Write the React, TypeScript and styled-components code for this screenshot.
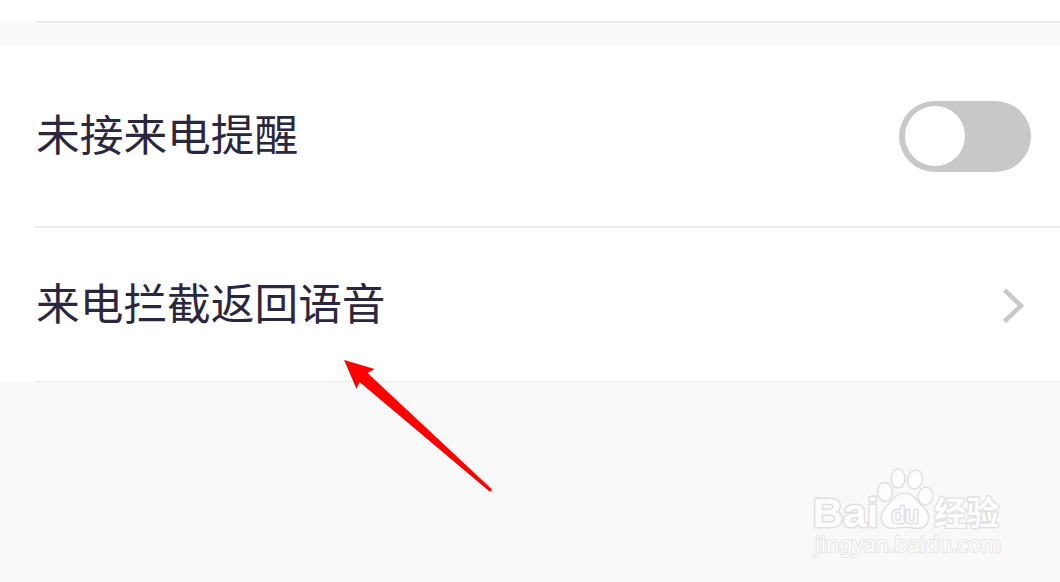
import React, { useState } from 'react'
import styled, { createGlobalStyle } from 'styled-components'

const GlobalStyle = createGlobalStyle`
  body {
    margin: 0;
    background: #f9f9f9;
  }
`

const Page = styled.div`
  position: relative;
  display: flex;
  flex-direction: column;
  width: 1060px;
  height: 582px;
  overflow: hidden;
  background: #f9f9f9;
  font-family: 'Noto Sans CJK SC', sans-serif;
`

const Section = styled.section<{ $spaced?: boolean }>`
  display: flex;
  flex-direction: column;
  margin-top: ${({ $spaced }) => ($spaced ? '23px' : '0')};
  background: #fff;
`

const Row = styled.div<{ $height: number; $right?: number }>`
  display: flex;
  align-items: center;
  justify-content: space-between;
  box-sizing: border-box;
  height: ${({ $height }) => $height}px;
  padding: 0 ${({ $right = 0 }) => $right}px 0 36px;
`

const Divider = styled.div<{ $thin?: boolean }>`
  height: ${({ $thin }) => ($thin ? 1 : 2)}px;
  margin-left: 35px;
  background: #ececec;
`

const Label = styled.span`
  padding-bottom: 8px;
  color: #2a273e;
  font-size: 43.7px;
  line-height: 64px;
  white-space: nowrap;
`

const Switch = styled.button<{ $on: boolean }>`
  display: flex;
  align-items: center;
  justify-content: ${({ $on }) => ($on ? 'flex-end' : 'flex-start')};
  box-sizing: border-box;
  width: 132px;
  height: 71px;
  padding: 0 6px;
  border: none;
  border-radius: 36px;
  background: ${({ $on }) => ($on ? '#4c8bf5' : '#c8c8c8')};
  cursor: pointer;
`

const Knob = styled.span`
  width: 60px;
  height: 60px;
  border-radius: 50%;
  background: #fff;
`

const Chevron = styled.svg`
  display: block;
  width: 24px;
  height: 38px;
`

const Pointer = styled.svg`
  position: absolute;
  left: 340px;
  top: 355px;
  pointer-events: none;
`

const Watermark = styled.svg`
  position: absolute;
  left: 800px;
  top: 460px;
  pointer-events: none;
`

const App: React.FC = () => {
  const [remind, setRemind] = useState(false)

  return (
    <>
      <GlobalStyle />
      <Page>
        <Section>
          <Row $height={21} />
          <Divider />
        </Section>

        <Section $spaced>
          <Row $height={180} $right={29}>
            <Label>未接来电提醒</Label>
            <Switch $on={remind} onClick={() => setRemind(!remind)}>
              <Knob />
            </Switch>
          </Row>
          <Divider />
          <Row $height={153} $right={36}>
            <Label>来电拦截返回语音</Label>
            <Chevron viewBox="0 0 24 38" fill="none">
              <path d="M4.500 4L21 19.800L4.500 35.500" stroke="#c8c8c8" strokeWidth="4.500" />
            </Chevron>
          </Row>
          <Divider $thin />
        </Section>

        <Pointer width="156" height="142" viewBox="340 355 156 142">
          <path
            d="M344 360L374.500 369L367.500 373L491 488.500Q492.500 491 489.500 491.500L359.500 382L356.500 389Z"
            fill="#ff0000"
          />
        </Pointer>

        <Watermark width="220" height="110" viewBox="0 0 220 110">
          <g fill="#fdfdfd" stroke="#dfdfdf" strokeWidth="1.500" strokeLinejoin="round">
            <text
              x="12.500"
              y="67"
              fontFamily="'Liberation Sans', sans-serif"
              fontSize="41"
              fontWeight="700"
              strokeWidth="3"
              paintOrder="stroke"
              textLength="66"
              lengthAdjust="spacingAndGlyphs"
            >
              Bai
            </text>
            <ellipse cx="85" cy="32" rx="7.500" ry="9.500" transform="rotate(-8 85 32)" />
            <ellipse cx="98" cy="18.500" rx="7" ry="9.500" />
            <ellipse cx="115" cy="19.500" rx="7.500" ry="9.500" transform="rotate(12 115 19.500)" />
            <ellipse cx="125.500" cy="36" rx="7.300" ry="9" transform="rotate(8 125.500 36)" />
            <path d="M105 33C96 33 93 40 88 45C82 50 80 56 82 62C84 68 90 69 97 68C103 67 107 67 113 68C121 69 126 68 128 61C130 54 127 50 121 45C116 40 113 33 105 33Z" />
            <text
              x="91.500"
              y="62.500"
              fontFamily="'Liberation Sans', sans-serif"
              fontSize="24"
              fontWeight="400"
              strokeWidth="3"
              paintOrder="stroke"
              textLength="27"
              lengthAdjust="spacingAndGlyphs"
            >
              du
            </text>
            <text
              x="134"
              y="65"
              fontFamily="'Noto Sans CJK SC', sans-serif"
              fontSize="33"
              fontWeight="700"
              strokeWidth="2.600"
              paintOrder="stroke"
              textLength="65"
              lengthAdjust="spacingAndGlyphs"
            >
              经验
            </text>
          </g>
          <text
            x="15"
            y="92"
            fontFamily="'Noto Sans', sans-serif"
            fontSize="21"
            fill="#fdfdfd"
            stroke="#e4e4e4"
            strokeWidth="2"
            paintOrder="stroke"
            textLength="186"
            lengthAdjust="spacingAndGlyphs"
          >
            jingyan.baidu.com
          </text>
        </Watermark>
      </Page>
    </>
  )
}

export default App
